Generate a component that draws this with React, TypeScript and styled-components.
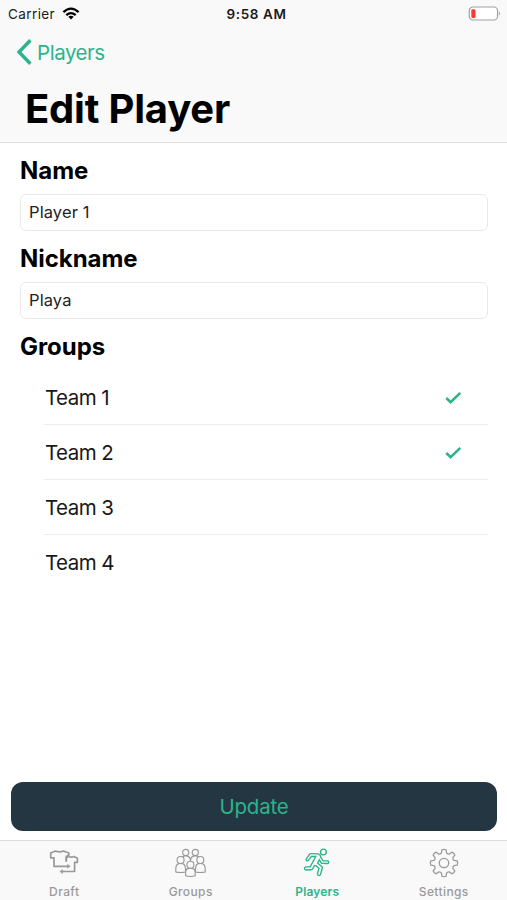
import React from 'react';
import styled, { createGlobalStyle } from 'styled-components';

const GREEN = '#2bb48a';
const GRAY = '#999999';

const GlobalStyle = createGlobalStyle`
  * { box-sizing: border-box; }
  body { margin: 0; background: #fff; font-family: Inter, "Liberation Sans", sans-serif; color: #000; }
  svg { display: block; flex: none; }
  button, input { font-family: inherit; }
`;

const Screen = styled.div`
  width: 507px;
  height: 900px;
  display: flex;
  flex-direction: column;
  background: #fff;
  overflow: hidden;
`;

const Header = styled.header`
  height: 143px;
  flex: none;
  background: #f9f9f9;
  border-bottom: 1px solid #e0e0e0;
`;

const StatusBar = styled.div`
  height: 27px;
  padding: 0 6px 0 8px;
  display: grid;
  grid-template-columns: 1fr auto 1fr;
  align-items: center;
  font-size: 13.5px;
  color: #1a1a1a;
`;

const Carrier = styled.div`
  display: flex;
  align-items: center;
  gap: 7px;
  letter-spacing: 0.4px;
`;

const Clock = styled.div`
  padding-left: 4px;
  font-weight: 600;
  letter-spacing: 0.6px;
`;

const Battery = styled.div`
  display: flex;
  justify-content: flex-end;
`;

const BackButton = styled.button`
  display: flex;
  align-items: center;
  gap: 5px;
  height: 50px;
  padding: 0 0 0 16px;
  border: 0;
  background: none;
  color: ${GREEN};
  font-size: 20.5px;
  letter-spacing: -0.45px;
`;

const Title = styled.h1`
  margin: 7px 0 0 25px;
  font-size: 40px;
  line-height: 50px;
  font-weight: 700;
  letter-spacing: -0.2px;
`;

const Form = styled.main`
  flex: 1;
  padding: 11px 19px 0 20px;
`;

const Heading = styled.h2`
  margin: 0 0 7px;
  font-size: 24px;
  line-height: 33px;
  font-weight: 700;
  letter-spacing: -0.05px;
`;

const TextInput = styled.input`
  display: block;
  width: 100%;
  height: 37px;
  margin-bottom: 11px;
  padding: 0 8px 2px;
  border: 1px solid #e9e9e9;
  border-radius: 6px;
  background: #fff;
  color: #222;
  font-size: 16.5px;
  letter-spacing: 0.1px;
  outline: none;
`;

const GroupList = styled.ul`
  list-style: none;
  margin: 0 0 0 24px;
  padding: 0;
`;

const GroupRow = styled.li`
  height: 55px;
  padding: 0 25px 0 1px;
  display: flex;
  align-items: center;
  justify-content: space-between;
  border-bottom: 1px solid #ededed;
  color: #181818;
  font-size: 20.5px;
  letter-spacing: -0.55px;
  &:last-child { border-bottom-color: transparent; }
`;

const UpdateButton = styled.button`
  flex: none;
  height: 49px;
  margin: 0 10px 9px 11px;
  border: 0;
  border-radius: 12px;
  background: #253643;
  color: ${GREEN};
  font-size: 20.5px;
  letter-spacing: -0.2px;
`;

const TabBar = styled.nav`
  flex: none;
  height: 60px;
  display: grid;
  grid-template-columns: repeat(4, 1fr);
  padding-left: 1px;
  border-top: 1px solid #dcdcdc;
  background: #f9f9f9;
`;

const Tab = styled.div<{ $active?: boolean }>`
  display: flex;
  flex-direction: column;
  align-items: center;
  padding-top: 7px;
  gap: 6px;
  color: ${(p) => (p.$active ? GREEN : GRAY)};
  font-size: 12px;
  line-height: 16px;
  font-weight: ${(p) => (p.$active ? 600 : 500)};
  letter-spacing: ${(p) => (p.$active ? '0.15px' : '0.4px')};
`;

const Check = () => (
  <svg width="18" height="16" viewBox="0 0 18 16" fill="none" stroke={GREEN} strokeWidth="2.5">
    <path d="M1.3 9 5.6 13.2 15.3 3.8" />
  </svg>
);

const DraftIcon = () => (
  <svg width="32" height="30" viewBox="0 0 32 30" fill="none" stroke="currentColor" strokeWidth="1.7" strokeLinejoin="round">
    <path d="M18.3 12V8.2L20.8 7.3V5L15.5 3Q11.5 4.8 7.5 3L2.7 5V9.8H6V18.3H20" />
    <path d="M18.3 14V9.6L20.5 8.4Q23.5 9.8 26 8.4L29.4 10.2V14.3H26.6V23.5H13" />
    <path d="M19.5 16.3 22.3 18.3 19.5 20.3ZM14.6 21.4 11.8 23.5 14.6 25.6Z" fill="currentColor" strokeWidth="0.4" />
  </svg>
);

const GroupsIcon = () => (
  <svg width="33" height="30" viewBox="0 0 33 30" fill="#f9f9f9" stroke="currentColor" strokeWidth="1.15">
    <path d="M7 16V13Q7 7.8 11.7 7.8T16.5 13V16M16.5 16V13Q16.5 7.8 21.3 7.8T26 13V16" />
    <circle cx="11.7" cy="4.4" r="3.1" />
    <circle cx="21.3" cy="4.4" r="3.1" />
    <path d="M1.8 24V20.3Q2 15.4 6.6 15.4T11.5 20.3V24Q6.6 25 1.8 24ZM21.5 24V20.3Q21.7 15.4 26.3 15.4T31.2 20.3V24Q26.3 25 21.5 24Z" />
    <circle cx="6.6" cy="12" r="3.5" />
    <circle cx="26.3" cy="12" r="3.5" />
    <path d="M11.6 27.8V24.6Q11.6 20.1 16.4 20.1T21.2 24.6V27.8Q16.4 29.2 11.6 27.8Z" />
    <circle cx="16.4" cy="16.7" r="3.5" />
  </svg>
);

const runnerArms = 'M4.4 11.4 7.8 7 15 7.2 19.2 14 24.4 14.2';
const runnerLegs = 'M10.8 15.5 8.2 20.2 3 20.4M12.8 15.6 17.8 19.8 16 25.9';
const runnerTorso = 'M15.2 8.8 11.9 15.2';

const PlayersIcon = () => (
  <svg width="28" height="30" viewBox="0 0 28 30" fill="none" strokeLinecap="round" strokeLinejoin="round">
    <g stroke="currentColor">
      <path d={runnerArms} strokeWidth="4" />
      <path d={runnerLegs} strokeWidth="4.5" />
      <path d={runnerTorso} strokeWidth="6" />
    </g>
    <g stroke="#f9f9f9">
      <path d={runnerArms} strokeWidth="1.3" />
      <path d={runnerLegs} strokeWidth="1.8" />
      <path d={runnerTorso} strokeWidth="3.4" />
    </g>
    <circle cx="20.4" cy="4" r="2.9" stroke="currentColor" strokeWidth="1.4" />
  </svg>
);

const gearPath = Array.from({ length: 8 }, (_, i) => {
  const at = (r: number, deg: number) => {
    const a = ((i * 45 + deg - 90) * Math.PI) / 180;
    return `${(15 + r * Math.cos(a)).toFixed(2)} ${(15 + r * Math.sin(a)).toFixed(2)}`;
  };
  return `${i ? 'L' : 'M'}${at(10.4, -14)}L${at(13.4, -9)}Q${at(14.1, 0)} ${at(13.4, 9)}L${at(10.4, 14)}Q${at(9.3, 22.5)} ${at(10.4, 31)}`;
}).join('') + 'Z';

const SettingsIcon = () => (
  <svg width="30" height="30" viewBox="0 0 30 30" fill="none" stroke="currentColor" strokeWidth="1.3" strokeLinejoin="round">
    <path d={gearPath} />
    <circle cx="15" cy="15" r="4.7" />
  </svg>
);

const groups = [
  { name: 'Team 1', selected: true },
  { name: 'Team 2', selected: true },
  { name: 'Team 3', selected: false },
  { name: 'Team 4', selected: false },
];

const tabs = [
  { label: 'Draft', Icon: DraftIcon },
  { label: 'Groups', Icon: GroupsIcon },
  { label: 'Players', Icon: PlayersIcon, active: true },
  { label: 'Settings', Icon: SettingsIcon },
];

export default function App() {
  return (
    <>
      <GlobalStyle />
      <Screen>
        <Header>
          <StatusBar>
            <Carrier>
              Carrier
              <svg width="18" height="13" viewBox="0 0 18 13" fill="none" stroke="#000" strokeWidth="2.3">
                <path d="M1.4 5.1Q9-1.8 16.6 5.1M4.3 8.2Q9 4 13.7 8.2" />
                <path d="M6.3 9.7Q9 7.6 11.7 9.7L9 12.6Z" fill="#000" stroke="none" />
              </svg>
            </Carrier>
            <Clock>9:58 AM</Clock>
            <Battery>
              <svg width="33" height="16" viewBox="0 0 33 16" fill="none">
                <rect x="1.3" y="1" width="28.2" height="13" rx="3.6" fill="#fff" stroke="#a2a2a6" strokeWidth="1.2" />
                <rect x="3.3" y="3.2" width="4.2" height="8.8" rx="1.3" fill="#ff3930" />
                <path d="M30.8 5.2Q33 7.4 30.8 9.8Z" fill="#a2a2a6" />
              </svg>
            </Battery>
          </StatusBar>
          <BackButton>
            <svg width="16" height="28" viewBox="0 0 16 28" fill="none" stroke={GREEN} strokeWidth="3.4">
              <path d="M14.4 2.2 3 14 14.4 25.8" />
            </svg>
            Players
          </BackButton>
          <Title>Edit Player</Title>
        </Header>
        <Form>
          <Heading>Name</Heading>
          <TextInput defaultValue="Player 1" aria-label="Name" />
          <Heading>Nickname</Heading>
          <TextInput defaultValue="Playa" aria-label="Nickname" />
          <Heading>Groups</Heading>
          <GroupList>
            {groups.map((g) => (
              <GroupRow key={g.name}>
                {g.name}
                {g.selected && <Check />}
              </GroupRow>
            ))}
          </GroupList>
        </Form>
        <UpdateButton>Update</UpdateButton>
        <TabBar>
          {tabs.map(({ label, Icon, active }) => (
            <Tab key={label} $active={active}>
              <Icon />
              {label}
            </Tab>
          ))}
        </TabBar>
      </Screen>
    </>
  );
}
